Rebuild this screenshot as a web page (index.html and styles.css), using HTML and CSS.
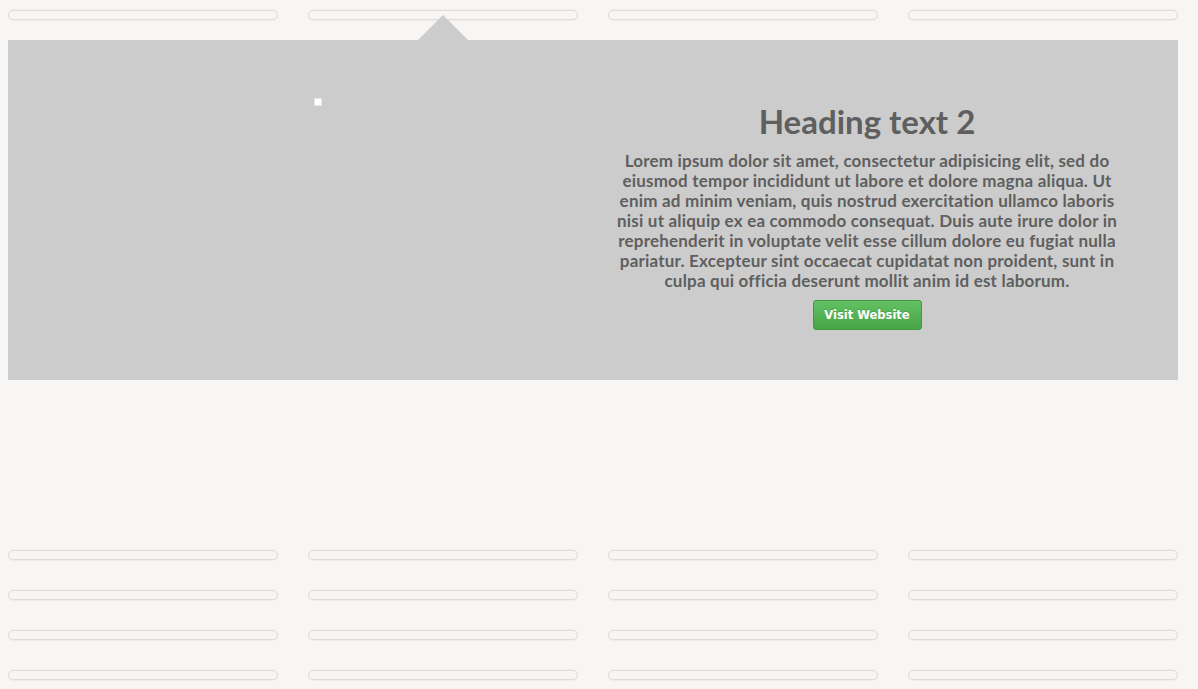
FILE: index.html
```html
<!DOCTYPE html>
<html>
<head>
<meta charset="utf-8">
<link rel="stylesheet" href="styles.css">
</head>
<body>
<div class="page">
  <div class="row">
    <div class="bar"></div><div class="bar"></div><div class="bar"></div><div class="bar"></div>
  </div>
  <div class="panel">
    <div class="pointer"></div>
    <div class="panel-left">
      <div class="thumb"></div>
    </div>
    <div class="panel-right">
      <h2 class="heading">Heading text 2</h2>
      <p class="copy">Lorem ipsum dolor sit amet, consectetur adipisicing elit, sed do<br>eiusmod tempor incididunt ut labore et dolore magna aliqua. Ut<br>enim ad minim veniam, quis nostrud exercitation ullamco laboris<br>nisi ut aliquip ex ea commodo consequat. Duis aute irure dolor in<br>reprehenderit in voluptate velit esse cillum dolore eu fugiat nulla<br>pariatur. Excepteur sint occaecat cupidatat non proident, sunt in<br>culpa qui officia deserunt mollit anim id est laborum.</p>
      <a class="btn">Visit Website</a>
    </div>
  </div>
  <div class="spacer"></div>
  <div class="row">
    <div class="bar"></div><div class="bar"></div><div class="bar"></div><div class="bar"></div>
  </div>
  <div class="row">
    <div class="bar"></div><div class="bar"></div><div class="bar"></div><div class="bar"></div>
  </div>
  <div class="row">
    <div class="bar"></div><div class="bar"></div><div class="bar"></div><div class="bar"></div>
  </div>
  <div class="row">
    <div class="bar"></div><div class="bar"></div><div class="bar"></div><div class="bar"></div>
  </div>
</div>
</body>
</html>
```
FILE: styles.css
```css
html, body {
  margin: 0;
  padding: 0;
  background: #f7f6f4;
  overflow: hidden;
}
.page {
  width: 1170px;
  padding: 0 8px;
  font-family: Lato, "Open Sans", sans-serif;
}
.row {
  display: flex;
  gap: 30px;
  height: 40px;
  padding-top: 10px;
  box-sizing: border-box;
}
.bar {
  width: 270px;
  height: 10px;
  box-sizing: border-box;
  border: 1px solid #dedcd8;
  border-radius: 5px;
  background: #f7f6f4;
  box-shadow: 0 1px 1px rgba(0,0,0,0.04), 0 -1px 1px rgba(0,0,0,0.02);
}
.panel {
  position: relative;
  height: 340px;
  background: #cccccc;
  display: flex;
}
.pointer {
  position: absolute;
  top: -25px;
  left: 410px;
  width: 0;
  height: 0;
  border-left: 25px solid transparent;
  border-right: 25px solid transparent;
  border-bottom: 25px solid #cccccc;
}
.panel-left {
  width: 600px;
}
.thumb {
  width: 8px;
  height: 8px;
  box-sizing: border-box;
  background: #ffffff;
  border: 1px solid #e8e8e8;
  margin: 58px 0 0 306px;
}
.panel-right {
  width: 518px;
  text-align: center;
  color: #5f5f5f;
  padding-top: 61px;
}
.heading {
  margin: 0;
  font-size: 33px;
  line-height: 40px;
  font-weight: 700;
}
.copy {
  margin: 10px 0 0;
  font-size: 17px;
  line-height: 20px;
  font-weight: 700;
  letter-spacing: 0.2px;
}
.btn {
  display: inline-block;
  margin-top: 9px;
  width: 109px;
  height: 30px;
  box-sizing: border-box;
  line-height: 28px;
  border: 1px solid #3f9a3f;
  border-radius: 3px;
  background: linear-gradient(#62c162, #47a547);
  color: #ffffff;
  font-family: "DejaVu Sans", sans-serif;
  font-size: 11.5px;
  font-weight: 700;
  text-shadow: 0 -1px 0 rgba(0,0,0,0.15);
}
.spacer {
  height: 160px;
}
```
